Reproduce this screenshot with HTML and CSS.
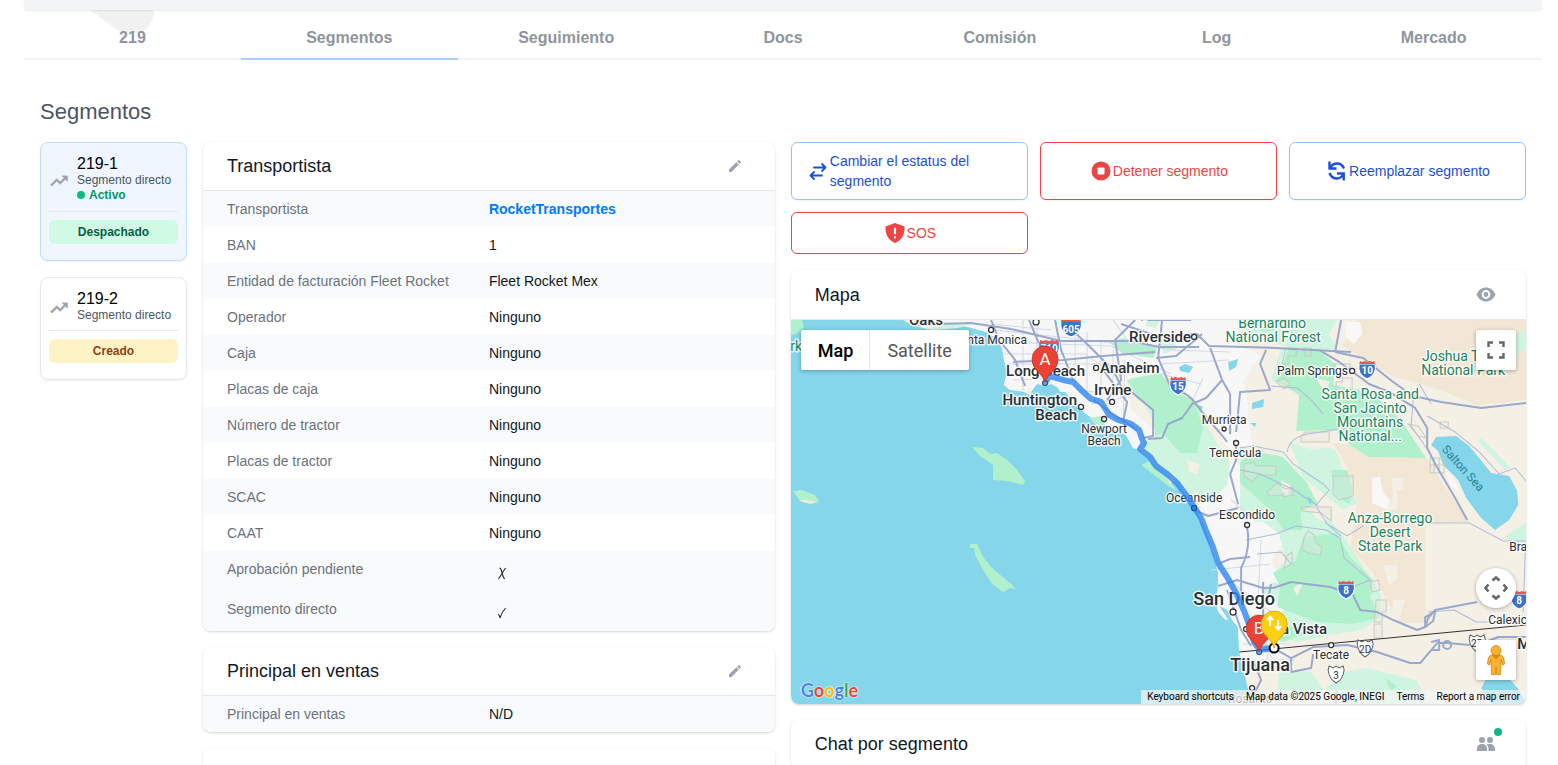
FILE: index.html
```html
<!DOCTYPE html>
<html lang="es">
<head>
    <meta charset="UTF-8">
    <meta name="viewport" content="width=device-width, initial-scale=1.0">
    <title>219 - Segmentos</title>
    <link rel="stylesheet" href="styles.css">
</head>
<body>
    <div class="page">
        <header class="topbar"></header>

        <nav class="tabs">
            <svg class="tabs-leaf" viewBox="0 0 66 24" aria-hidden="true"><path d="M0 0H64C64 12 56 23 44 23C32 23 27 20 22 16Z" fill="#f1f1f1"/></svg>
            <a href="#" class="tab">219</a>
            <a href="#" class="tab active">Segmentos</a>
            <a href="#" class="tab">Seguimiento</a>
            <a href="#" class="tab">Docs</a>
            <a href="#" class="tab">Comisión</a>
            <a href="#" class="tab">Log</a>
            <a href="#" class="tab">Mercado</a>
        </nav>

        <main class="content">
            <h1>Segmentos</h1>

            <div class="columns">
                <!-- Segment list -->
                <aside class="segments">
                    <a href="#" class="segment selected">
                        <span class="segment-info">
                            <svg class="segment-icon" viewBox="0 0 24 24"><path d="M16 6l2.29 2.29-4.88 4.88-4-4L2 16.59 3.41 18l6-6 4 4 6.3-6.29L22 12V6z" fill="#9ca3af" stroke="#9ca3af"/></svg>
                            <span class="segment-text">
                                <span class="segment-name">219-1</span>
                                <span class="segment-type">Segmento directo</span>
                                <span class="segment-active">Activo</span>
                            </span>
                        </span>
                        <span class="badge badge-green">Despachado</span>
                    </a>
                    <a href="#" class="segment">
                        <span class="segment-info">
                            <svg class="segment-icon" viewBox="0 0 24 24"><path d="M16 6l2.29 2.29-4.88 4.88-4-4L2 16.59 3.41 18l6-6 4 4 6.3-6.29L22 12V6z" fill="#9ca3af" stroke="#9ca3af"/></svg>
                            <span class="segment-text">
                                <span class="segment-name">219-2</span>
                                <span class="segment-type">Segmento directo</span>
                            </span>
                        </span>
                        <span class="badge badge-yellow">Creado</span>
                    </a>
                </aside>

                <!-- Details -->
                <div class="stack">
                    <section class="card">
                        <div class="card-header">
                            <h2>Transportista</h2>
                            <button class="icon-btn" aria-label="Editar"><svg width="16" height="16" viewBox="0 0 24 24" fill="#9ca3af"><path d="M3 17.2V21h3.8L17.8 9.9l-3.7-3.7zM20.7 7a1 1 0 0 0 0-1.4l-2.3-2.3a1 1 0 0 0-1.4 0l-1.8 1.8 3.7 3.7z"/></svg></button>
                        </div>
                        <table class="details">
                            <tr class="alt"><th>Transportista</th><td><a href="#">RocketTransportes</a></td></tr>
                            <tr><th>BAN</th><td>1</td></tr>
                            <tr class="alt"><th>Entidad de facturación Fleet Rocket</th><td>Fleet Rocket Mex</td></tr>
                            <tr><th>Operador</th><td>Ninguno</td></tr>
                            <tr class="alt"><th>Caja</th><td>Ninguno</td></tr>
                            <tr><th>Placas de caja</th><td>Ninguno</td></tr>
                            <tr class="alt"><th>Número de tractor</th><td>Ninguno</td></tr>
                            <tr><th>Placas de tractor</th><td>Ninguno</td></tr>
                            <tr class="alt"><th>SCAC</th><td>Ninguno</td></tr>
                            <tr><th>CAAT</th><td>Ninguno</td></tr>
                            <tr class="alt"><th>Aprobación pendiente</th><td><svg class="mark" viewBox="0 0 26 24"><path d="M10.500 9q1.200 0 1.700 2l2.100 7q.4 1.500 1.700 1.500M16.500 9l-7 11" fill="none" stroke="#1f2937" stroke-width="1.100"/></svg></td></tr>
                            <tr class="alt"><th>Segmento directo</th><td><svg class="mark" viewBox="0 0 26 24"><path d="M9 15.500q1.500 0 2 3.500 2-6 5.500-10" fill="none" stroke="#1f2937" stroke-width="1.100"/></svg></td></tr>
                        </table>
                    </section>

                    <section class="card">
                        <div class="card-header">
                            <h2>Principal en ventas</h2>
                            <button class="icon-btn" aria-label="Editar"><svg width="16" height="16" viewBox="0 0 24 24" fill="#9ca3af"><path d="M3 17.2V21h3.8L17.8 9.9l-3.7-3.7zM20.7 7a1 1 0 0 0 0-1.4l-2.3-2.3a1 1 0 0 0-1.4 0l-1.8 1.8 3.7 3.7z"/></svg></button>
                        </div>
                        <table class="details">
                            <tr class="alt"><th>Principal en ventas</th><td>N/D</td></tr>
                        </table>
                    </section>

                    <section class="card">
                        <div class="card-header"></div>
                    </section>
                </div>

                <!-- Actions, map and chat -->
                <div class="stack">
                    <div class="actions">
                        <button class="action blue">
                            <svg viewBox="0 0 20 20" fill="none" stroke="currentColor" stroke-width="1.800" stroke-linecap="round" stroke-linejoin="round"><path d="M6 6.500h11M14 3l3.500 3.500L14 10M14 14.500H3M6 11l-3.500 3.500L6 18"/></svg>
                            <span>Cambiar el estatus del segmento</span>
                        </button>
                        <button class="action red">
                            <svg viewBox="0 0 20 20" fill="currentColor"><circle cx="10" cy="10" r="9.500"/><rect x="6.500" y="6.500" width="7" height="7" rx="1" fill="#fff"/></svg>
                            <span>Detener segmento</span>
                        </button>
                        <button class="action blue">
                            <svg viewBox="0 0 20 20" fill="none" stroke="currentColor" stroke-width="2.400"><path d="M2.500.500v7H9.500M3 7C5 3.500 8 2.500 10 2.500q5 0 7 5M16.700 19.500v-7H10M16.500 13c-2 3.500-4.500 4.500-6.500 4.500q-5.500 0-7.500-5.500"/></svg>
                            <span>Reemplazar segmento</span>
                        </button>
                        <button class="action red">
                            <svg viewBox="0 0 20 20" fill="currentColor"><path d="M10 0L19.500 3.500C20 11 17 17 10 20 3 17 0 11 .5 3.500Z"/><path d="M10 5.500v5M10 14v.5" stroke="#fff" stroke-width="2.200" stroke-linecap="round"/></svg>
                            <span>SOS</span>
                        </button>
                    </div>

                    <section class="card">
                        <div class="card-header tall">
                            <h2>Mapa</h2>
                            <button class="icon-btn wide" aria-label="Ocultar mapa"><svg width="20" height="20" viewBox="0 0 20 20"><path d="M.5 9.500C2.500 5 6 2.500 10 2.500s7.500 2.500 9.500 7c-2 4.500-5.500 7-9.500 7S2.500 14 .5 9.500z" fill="#9ca3af"/><circle cx="10" cy="9.500" r="3.400" fill="#9ca3af" stroke="#fff" stroke-width="2"/></svg></button>
                        </div>
                        <div class="map">
                            <svg class="map-canvas" viewBox="0 0 735 384" preserveAspectRatio="xMidYMid slice">
                                <defs>
                                    <g id="shield">
                                        <path d="M-8-6Q-10 5 0 9Q10 5 8-6Z" fill="#3a73c9" stroke="#fff"/>
                                        <path d="M-7-9l2 1 2-1 3 1 3-1 2 1 2-1 1 3H-8z" fill="#e05a5a"/>
                                    </g>
                                    <g id="shield-wide">
                                        <path d="M-10-6Q-12 6 0 10Q12 6 10-6Z" fill="#3a73c9" stroke="#fff"/>
                                        <path d="M-9-9l3 1 3-1 3 1 3-1 3 1 3-1 1 4H-10z" fill="#e05a5a"/>
                                    </g>
                                    <path id="mx" d="M-7-9l4 2 3-2 3 2 4-2 1 4q-1 9-8 13Q-7 4-8-5z" fill="#fff" stroke="#5f6368"/>
                                    <path id="pin" d="M0 24C-2 14-13 12-13 0a13 13 0 0 1 26 0C13 12 2 14 0 24z"/>
                                </defs>

                                <rect width="735" height="384" fill="#85d6ea"/>
                                <path d="M0 0h11l2 7-8 7-5 1z" fill="#b0f0cc"/>
                                <path d="M181 127l11 1 7 6 7-1 10 7 10 10 8 11-2 4-16-4-14-1v-15l-13-9zM179 224h7l6 13 10 12 17 14 6 6-6-1-7 4-11-8-9-14-8-15-1-7h-4z" fill="#b0f0cc"/>
                                <path d="M2 171l9-1 13 5 4 6-9 2-10-2z" fill="#b0f0cc"/>
                                <path d="M9 181q5-3 10 0l9 1-9 2z" fill="#f3e7d5"/>

                                <!-- Land -->
                                <path d="M112 0L121 5 132 8 142 10 166 8 179 5 195 12 205 18 211 28 213 40 216 52 213 65 219 70 233 72 240 76 246 68 256 70 262 72 270 68 276 74 283 84 298 96 310 99 320 109 335 115 342 128 349 130 359 140 365 147 382 160 395 172 403 188 410 198 415 210 422 233 427 253 427 267 424 280 427 292 434 300 441 299 447 308 448 332 452 347 457 370 458 384H735V0z" fill="#f5f0e5"/>
                                <!-- Urban areas -->
                                <path d="M150 0L195 12 205 18 211 28 213 40 216 52 213 65 219 70 246 68 262 72 276 72 283 84 298 96 320 108 335 115 342 128 350 130 362 125 366 112 340 90 335 60 370 52 400 78 425 110 440 104 458 90 452 60 470 36 445 24 446 0z" fill="#f7f7f7"/>
                                <path d="M398 176L415 210 427 253 426 290 447 306 448 332 455 350 470 345 500 335 490 322 470 310 500 290 520 272 490 262 480 240 498 215 475 205 460 190 452 150 442 140 425 165zM428 90L456 90 462 130 446 136 430 120z" fill="#f7f7f7"/>

                                <!-- Desert -->
                                <path d="M565 0H735V80L685 85 652 71 598 55 551 25zM542 123L579 127 582 137 636 138 649 160 679 202 634 203 634 303 607 303 582 253 559 227 566 183 556 147z" fill="#f2e6d5"/>
                                <path d="M581 158L589 157 592 173 599 180 596 190 581 183zM655 152L664 160 668 172 660 166zM555 2l14 0 2 12-8 10-8-6z" fill="#f9f8f7"/>
                                <path d="M600 158h12v12h-6v20h-10l6-14zM592 245h14v14l-8 6zM602 280h12l-6 20h-8z" fill="#f5f0e5"/>

                                <!-- Parks and forests -->
                                <g fill="#cff5e0">
                                    <path d="M445 0H545L538 14 545 28 528 32 498 28 478 20 455 14zM355 0h14l-4 8-10-2zM369 24l12-4 6 8-14 6zM142 2h20l18 2-18 4-20 2z"/>
                                    <path d="M339 58L369 53 386 73 405 82 414 103 426 123 439 143 436 165 425 176 403 187 382 158 365 146 352 126 368 112z"/>
                                    <path d="M498 122L520 118 545 131 555 158 566 183 552 190 530 172 512 158zM490 28L480 60 505 72 525 80 510 30z"/>
                                    <path d="M449 126L465 130 500 200 465 202 449 190zM465 196L530 190 552 215 590 275 588 298 570 310 505 322 480 312 478 300 500 285 482 253 495 240 488 214z"/>
                                    <path d="M575 348L625 360 640 384H560L535 368 552 352zM488 350l32 2 12 18-47 14zM705 24l30-14v20l-20 8zM715 216l20-14v30l-14-4z"/>
                                    <path d="M470 268l14-6 10 6-8 14-14-4zM690 118l30 30-6 2-28-30z"/>
                                </g>
                                <g fill="#b0f0cc">
                                    <path d="M336 60L369 53 386 73 402 80 412 107 406 133 389 133 372 113 364 116 362 90 345 78zM350 145l8-4 16 14 12 16-10-6z"/>
                                    <path d="M318 22l14-4 14 6 8 6-2 6-20-2zM340 28l12-8 14 10-4 8-14-2zM298 98l14-2 4 6-10 4zM470 0h20l-6 10-14 2z"/>
                                    <path d="M498 28L528 30 545 45 542 65 578 71 598 88 613 105 635 138 578 137 560 126 545 112 552 110 505 111 508 75 485 61z"/>
                                    <path d="M459 130L492 137 516 163 526 183 509 193 512 210 492 210 479 190 449 163V143zM540 150l16 0 6 20-4 14-14-8z"/>
                                    <path d="M512 217L545 213 559 237 582 260 579 277 588 298 562 304 526 302 486 287 489 267 482 253 505 240zM479 318l20-12 14 8-20 8zM594 358l12 8-6 6z"/>
                                </g>
                                <g fill="#f5f0e5">
                                    <path d="M500 112l30 2 12 12-18 4-22-6zM460 44l18 4 6 30-14 24-8-20zM396 140l12 4-2 10-8-2zM520 186l16 4-2 12-10-4zM375 156l8 4-4 4zM525 58l14 4-6 10z"/>
                                    <path d="M490 160l10 6-4 10-6-6zM512 262l-10 6 4 8zM535 316l20-4-4 8-14 2z"/>
                                </g>

                                <!-- Lakes -->
                                <path d="M645 117L665 116 678 126 688 138 700 153 718 156 726 171 727 185 718 200 704 210 690 198 675 178 667 160 652 145 647 131 640 125zM690 368L700 350 712 352 728 370 735 384H700zM388 47l6-3 8 3-4 6-9-2zM437 42l10-3-2 8-7 4zM461 83l12-4-1 8-11 2zM404 83l8 4-3 5zM516 177l5 2-2 6zM459 103h6l-1 4z" fill="#85d6ea"/>
                                <path d="M240 72l6-8 8 2 6-2 6 3 4 6-4 4-12-3-4 6-10 2zM428 286l8 4 8 16-8-8z" fill="#85d6ea"/>

                                <!-- Reservations -->
                                <g fill="#e6e6e0" fill-opacity=".4" stroke="#c8cbc6">
                                    <path d="M510 116l4-4h24v10h-28zM542 156h20v20l-14 4-6-6zM453 144l10-2 2 4h20v9h-18l-6 7-8-6zM476 172l10-9 8 6 8-2v8l-10 2v-2l-14 1zM485 62l8-4 6 6-6 5z"/>
                                    <path d="M513 217l4-6 6 4 2 8 6 4-2 8-12-2-6-4zM495 236l6-4v12l-8 4zM579 262l8-2 2 10-8 2zM585 280h10v12h-4v10h-8zM583 304h8v14h-8zM510 187h30v14l-10-8-18-2z"/>
                                    <path d="M495 28h10v8h-8v8h-6zM512 28h8v8h-6zM543 44h16v6h-10v8h12v12h-16v-8h6v-6h-8zM639 138h14v7h-14zM639 145h14v8h-14zM643 138v15M648 138v15M617 104l10 2 8 12-8-2zM649 102h8v6h-8z" fill="none"/>
                                </g>

                                <!-- Minor roads -->
                                <g fill="none" stroke="#d3d9e8">
                                    <path d="M205 10l180 20M210 22l110 4 60 28M216 44h90M222 60l50-2M214 34h80l20 14M232 0v70M246 0v60M284 6v60M296 12v66M310 20v54M322 30v50M334 40l-2 60M200 4l60 6M290 70l40 6M300 84l40-8M322 0l20 28"/>
                                    <path d="M368 44l70-4M380 30l60 2M370 54l40 10M398 88l14-30M440 180l24 20M420 250l60-6M440 262l40 30M470 220l-4 70M462 300l20 40M452 324h46M454 340h50M476 324v24"/>
                                </g>
                                <g fill="none" stroke="#b0bbd8">
                                    <path d="M448 128l14-2 30 6 10 12 30 20 6 6-14 16M496 132q2-14 20-18l40-6M480 66l26 2 14 12 12 14M526 188l10 16 20 12 16-10M449 150l20 4 34 16 24 16M455 220l30-6 20-8 30 4 14 8 4 20 26 22-20 8M534 202l16 14M500 244l-10-12-24 2"/>
                                    <path d="M622 80l-2 26 18 26M636 96l28 16 24 20 20 22 16-6 20 24M640 203h38l34 18 23 0M734 232l-2 60M637 292l26-2 22 12 14 0M628 64l12 20"/>
                                </g>

                                <!-- Highways -->
                                <g fill="none" stroke="#9aa8cb" stroke-width="2" stroke-linejoin="round">
                                    <path d="M120 5l60-2 40 6 50 12 70 0 28 6h40M200 0l8 20 16 20 10 26M238 0l10 24 6 34M222 42l50-2 40-4 52-4M264 0l6 30 12 30M270 0l26 24 26 26 10 20M330 4l36 12 40-2M344 0l-20 20 6 40-14 20M365 38l20-2 26-22M371 0l-4 38 12 28"/>
                                    <path d="M382 70q16 2 24 16l22 26 8 10M406 14l12 12 66 2 76 4M419 28l12 32-16 18-14 6-10 14-14 6-6 14-14 1M431 60l8 14 0 40M475 30l-6 14 10 26-30 2-4 40M350 0h50M550 0l-6 32"/>
                                    <path d="M528 30l20 12 30 22 20 8M544 32l28 6 30 24 20 14 28 6 40 6 45-5M598 72l26 16 12 20v20l8 16 20 34 12 22"/>
                                    <path d="M302 80l20 14 24 16M338 70l24 20v26l-10 2M312 50l24 32-4 20M445 124v16l-6 14 8 30M403 190l14 6 30-8"/>
                                    <path d="M456 208q4 20-6 40l0 34M429 243l10-4 20-2M427 266L446 260 472 268 482 268 500 262 539 267 562 275 569 290 586 292 602 300 626 310 634 307 637 298 644 290 686 282"/>
                                    <path d="M472 262v50M480 264l-4 20M436 270l14 40 10 16M468 332L486 330 500 338 522 327 556 325 586 332 619 343 629 343 646 323 656 323 679 325M500 338v14l20-4 2-14M462 340l8 20-12 24M545 370v14M687 325l20-8h28"/>
                                    <path d="M634 307l0-10 10-6-2 10zM640 322l8-2 0 10-8 0"/>
                                </g>
                                <circle cx="656" cy="325" r="4" fill="none" stroke="#9aa8cb" stroke-width="2"/>

                                <!-- Border -->
                                <path d="M448 332L735 305" stroke="#333" fill="none"/>

                                <!-- Place labels -->
                                <g class="place small">
                                    <text x="236" y="24" text-anchor="end">Santa Monica</text>
                                    <text x="313" y="113" text-anchor="middle">Newport</text>
                                    <text x="313" y="125" text-anchor="middle">Beach</text>
                                    <text x="433" y="104" text-anchor="middle">Murrieta</text>
                                    <text x="444" y="137" text-anchor="middle">Temecula</text>
                                    <text x="486" y="55">Palm Springs</text>
                                    <text x="403" y="182" text-anchor="middle">Oceanside</text>
                                    <text x="456" y="199" text-anchor="middle">Escondido</text>
                                    <text x="540" y="339" text-anchor="middle">Tecate</text>
                                    <text x="697" y="304">Calexico</text>
                                    <text x="718" y="231">Brawley</text>
                                    <text x="437" y="383">Rosarito</text>
                                </g>
                                <g class="place medium">
                                    <text x="118" y="5">Oaks</text>
                                    <text x="338" y="22">Riverside</text>
                                    <text x="215" y="56">Long Beach</text>
                                    <text x="309" y="53">Anaheim</text>
                                    <text x="286" y="85" text-anchor="end">Huntington</text>
                                    <text x="286" y="100" text-anchor="end">Beach</text>
                                    <text x="303" y="75">Irvine</text>
                                    <text x="536" y="314" text-anchor="end">Chula Vista</text>
                                    <text x="726" y="329">Mexicali</text>
                                </g>
                                <g class="place large">
                                    <text x="443" y="285" text-anchor="middle">San Diego</text>
                                    <text x="469" y="351" text-anchor="middle">Tijuana</text>
                                </g>
                                <g class="place park" text-anchor="middle">
                                    <text x="481" y="8">Bernardino</text>
                                    <text x="482" y="22">National Forest</text>
                                    <text x="579" y="79">Santa Rosa and</text>
                                    <text x="579" y="93">San Jacinto</text>
                                    <text x="579" y="107">Mountains</text>
                                    <text x="579" y="121">National...</text>
                                    <text x="669" y="41">Joshua Tree</text>
                                    <text x="672" y="55">National Park</text>
                                    <text x="599" y="203">Anza-Borrego</text>
                                    <text x="599" y="217">Desert</text>
                                    <text x="599" y="231">State Park</text>
                                    <text x="-3" y="31">Park</text>
                                </g>
                                <text class="water" transform="translate(669 151) rotate(48)" text-anchor="middle">Salton Sea</text>

                                <g fill="#fff" stroke="#333" stroke-width="1.300">
                                    <circle cx="200" cy="10" r="2.500"/><circle cx="245" cy="2" r="3"/><circle cx="305" cy="48" r="2.500"/><circle cx="403" cy="17" r="2.500"/>
                                    <circle cx="321" cy="82" r="2.500"/><circle cx="290" cy="87" r="2.500"/><circle cx="313" cy="99" r="2.500"/><circle cx="433" cy="109" r="2"/>
                                    <circle cx="445" cy="123" r="2.500"/><circle cx="561" cy="51" r="2.500"/><circle cx="403" cy="188" r="2.500"/><circle cx="456" cy="205" r="2.500"/>
                                    <circle cx="442" cy="292" r="3"/><circle cx="540" cy="325" r="2.500"/><circle cx="461" cy="368" r="2.500"/><circle cx="455" cy="309" r="2.500"/>
                                </g>

                                <!-- Highway shields -->
                                <use href="#shield-wide" x="280" y="7"/><use href="#shield-wide" x="258" y="29"/><use href="#shield" x="354" y="-8"/>
                                <use href="#shield" x="387" y="66"/><use href="#shield" x="576" y="50"/><use href="#shield" x="555" y="270"/><use href="#shield" x="728" y="280"/>
                                <g class="shield-text" text-anchor="middle">
                                    <text x="280" y="13">605</text><text x="258" y="32">710</text><text x="387" y="70">15</text><text x="576" y="54">10</text>
                                    <text x="555" y="274">8</text><text x="728" y="284">8</text>
                                </g>
                                <use href="#mx" x="574" y="329"/><use href="#mx" x="545" y="355"/><use href="#mx" x="686" y="324"/>
                                <g class="mx-text" text-anchor="middle"><text x="574" y="333">2D</text><text x="545" y="359">3</text><text x="686" y="327">2D</text></g>

                                <!-- Route -->
                                <path d="M254 63L258 56 272 60 282 62 290 70 300 79 310 82 315 90 318 95 327 100 340 104 348 110 351 119 353 123 349 129 359 137 365 146 376 154 386 163 395 175 403 187 410 198 415 211 421 225 427 243 436 257 445 273 453 291 459 307 463 322 468 329 483 328" fill="none" stroke="#2f86f2" stroke-opacity=".8" stroke-width="6" stroke-linejoin="round" stroke-linecap="round"/>
                                <circle cx="254" cy="63" r="2.500" fill="#6aa9f5" stroke="#1f4e96"/>
                                <circle cx="403" cy="188" r="2.500" fill="#2f86f2" stroke="#1f4e96"/>
                                <circle cx="468" cy="332" r="2.500" fill="#6aa9f5" stroke="#1f4e96"/>
                                <circle cx="483" cy="328" r="4.500" fill="#fff" stroke="#000" stroke-width="2"/>
                                <use href="#pin" x="254" y="39" fill="#ea4335" stroke="#b3261e" stroke-width=".6"/>
                                <use href="#pin" x="468" y="308" fill="#ea4335" stroke="#b3261e" stroke-width=".6"/>
                                <g class="pin-text" text-anchor="middle"><text x="254" y="45">A</text><text x="468" y="314">B</text></g>
                                <use href="#pin" x="483" y="304" fill="#fccf12" stroke="#dc9a00" stroke-width=".8"/>
                                <path d="M479 306v-9M476 300l3-3.500 3 3.500M487 300v9M484 306l3 3.500 3-3.500" fill="none" stroke="#fff" stroke-width="2"/>
                            </svg>

                            <div class="map-type">
                                <button class="chosen">Map</button>
                                <button>Satellite</button>
                            </div>
                            <button class="map-btn fullscreen" aria-label="Fullscreen"><svg width="18" height="18" viewBox="0 0 18 18"><path d="M1.500 6V1.500H6M12 1.500h4.500V6M16.500 12v4.500H12M6 16.500H1.500V12" fill="none" stroke="#666" stroke-width="2.400"/></svg></button>
                            <button class="map-btn camera" aria-label="Camera controls"><svg width="24" height="24" viewBox="0 0 24 24"><path d="M8.500 4.500L12 1.500l3.500 3M8.500 19.500l3.500 3 3.500-3M4.500 8.500L1.500 12l3 3.500M19.500 8.500l3 3.500-3 3.500" fill="none" stroke="#666" stroke-width="2.600"/></svg></button>
                            <button class="map-btn pegman" aria-label="Street View"><svg width="18" height="30" viewBox="0 0 18 30" fill="#fbb12d" stroke="#c9861b" stroke-width=".8"><path d="M4 10h10q3 1 3.500 9l-2 1-1.500-5-.5 14.500h-4L9 22l-.5 7.500h-4L4 15l-1.500 5-2-1Q1 11 4 10z"/><path d="M5 10h8l-4 4z" fill="#e28b1d"/><circle cx="9" cy="5.500" r="5"/></svg></button>

                            <a href="#" class="google-logo"><span class="g-blue">G</span><span class="g-red">o</span><span class="g-yellow">o</span><span class="g-blue">g</span><span class="g-green">l</span><span class="g-red">e</span></a>
                            <div class="map-credits">
                                <button>Keyboard shortcuts</button>
                                <span>Map data ©2025 Google, INEGI</span>
                                <a href="#">Terms</a>
                                <a href="#">Report a map error</a>
                            </div>
                        </div>
                    </section>

                    <section class="card">
                        <div class="card-header">
                            <h2>Chat por segmento</h2>
                            <button class="icon-btn wide people" aria-label="Participantes">
                                <svg width="20" height="20" viewBox="0 0 20 20" fill="#9ca3af"><circle cx="6" cy="6" r="3"/><circle cx="14" cy="6" r="3"/><path d="M1 17v-2c0-3 2-5 5-5s5 2 5 5v2zM12.500 17v-2q0-3-2-4.500Q12 10 14 10c3 0 5 2 5 5v2z"/></svg>
                                <span class="online"></span>
                            </button>
                        </div>
                    </section>
                </div>
            </div>
        </main>
    </div>
</body>
</html>
```
FILE: styles.css
```css
* {
    box-sizing: border-box;
}

body {
    margin: 0;
    font-family: "Liberation Sans", Arial, sans-serif;
    font-size: 14px;
    line-height: 20px;
    background-color: #fff;
    color: #111827;
    overflow-x: hidden;
}

a {
    text-decoration: none;
}

button {
    font-family: inherit;
    margin: 0;
    padding: 0;
    border: none;
    background: none;
    cursor: pointer;
}

.page {
    margin: 0 16px 0 24px;
}

.topbar {
    position: relative;
    z-index: 1;
    height: 10px;
    background: #f3f4f6;
    border-radius: 0 0 4px 4px;
    box-shadow: 0 1px 2px rgba(0, 0, 0, 0.08);
}

/* Tabs */
.tabs {
    position: relative;
    display: flex;
}

.tabs-leaf {
    position: absolute;
    top: 0;
    left: 66px;
    width: 66px;
    height: 24px;
}

.tab {
    position: relative;
    flex: 1;
    padding: 18px 0 10px;
    text-align: center;
    font-size: 16px;
    font-weight: bold;
    color: #8f959c;
    border-bottom: 2px solid #f1f2f4;
}

.tab.active {
    border-bottom-color: #a9cffc;
}

.content {
    padding: 37px 16px 0;
}

h1 {
    margin: 0 0 15px;
    font-size: 22px;
    font-weight: normal;
    line-height: 30px;
    color: #4b5563;
}

.columns {
    display: grid;
    grid-template-columns: 147px 7fr 9fr;
    align-items: start;
    gap: 16px;
}

.stack {
    display: flex;
    flex-direction: column;
    gap: 16px;
    min-width: 0;
}

/* Segment list */
.segments {
    display: flex;
    flex-direction: column;
    gap: 16px;
}

.segment {
    display: block;
    padding: 12px 8px 16px;
    border: 1px solid #e5e7eb;
    border-radius: 8px;
    box-shadow: 0 1px 2px rgba(0, 0, 0, 0.06);
}

.segment.selected {
    background: #eff6ff;
    border-color: #bfdbfe;
}

.segment-info {
    display: flex;
    align-items: center;
    gap: 8px;
    padding-bottom: 8px;
    border-bottom: 1px solid #e5e7eb;
}

.segment-icon {
    width: 20px;
    height: 20px;
    margin-top: 4px;
}

.segment-text span {
    display: block;
    font-size: 12px;
    line-height: 16px;
}

.segment-text .segment-name {
    font-size: 16px;
    line-height: 18px;
    color: #000;
}

.segment-text .segment-type {
    line-height: 14px;
    color: #4b5563;
    white-space: nowrap;
}

.segment-active {
    font-weight: bold;
    color: #059669;
}

.segment-active::before {
    content: "";
    display: inline-block;
    width: 8px;
    height: 8px;
    margin-right: 4px;
    border-radius: 50%;
    background: #10b981;
}

.badge {
    display: block;
    margin-top: 8px;
    border-radius: 6px;
    text-align: center;
    font-size: 12px;
    font-weight: bold;
    line-height: 24px;
}

.badge-green {
    background: #d1fae5;
    color: #065f46;
}

.badge-yellow {
    background: #fef3c7;
    color: #92400e;
}

/* Cards */
.card {
    background: #fff;
    border-radius: 8px;
    overflow: hidden;
    box-shadow: 0 1px 3px rgba(0, 0, 0, 0.12), 0 1px 2px rgba(0, 0, 0, 0.06);
}

.card-header {
    display: flex;
    justify-content: space-between;
    align-items: center;
    height: 49px;
    padding: 0 32px 0 24px;
    border-bottom: 1px solid #e5e7eb;
}

.card-header.tall {
    height: 50px;
}

h2 {
    margin: 0;
    font-size: 18px;
    font-weight: normal;
    line-height: 28px;
}

.icon-btn svg {
    display: block;
}

.icon-btn.wide {
    margin-right: -2px;
}

.people {
    position: relative;
}

.online {
    position: absolute;
    top: -6px;
    right: -6px;
    width: 8px;
    height: 8px;
    border-radius: 50%;
    background: #10b981;
}

.details {
    width: 100%;
    border-collapse: collapse;
    table-layout: fixed;
}

.details .alt {
    background: #f9fafb;
}

.details th,
.details td {
    width: 50%;
    padding: 8px 0;
    text-align: left;
    vertical-align: top;
}

.details th {
    padding-left: 24px;
    font-weight: normal;
    color: #6b7280;
}

.details a {
    font-weight: bold;
    color: #007bff;
}

.mark {
    display: block;
    width: 26px;
    height: 24px;
}

/* Actions */
.actions {
    display: grid;
    grid-template-columns: repeat(3, 1fr);
    gap: 12px;
}

.action {
    display: flex;
    justify-content: center;
    align-items: center;
    gap: 2px;
    min-height: 42px;
    padding: 8px 14px 8px 16px;
    border: 1px solid;
    border-radius: 6px;
    background: #fff;
    font-size: 14px;
    line-height: 20px;
    text-align: left;
    box-shadow: 0 1px 2px rgba(0, 0, 0, 0.05);
}

.action svg {
    flex: none;
    width: 20px;
    height: 20px;
}

.action.blue {
    border-color: #93c5fd;
    color: #1d4ed8;
}

.action.red {
    border-color: #ef4444;
    color: #ef4444;
}

/* Map */
.map {
    position: relative;
    height: 384px;
    font-family: Roboto, Arial, sans-serif;
}

.map-canvas {
    display: block;
    width: 100%;
    height: 100%;
}

.place {
    fill: #2b2f33;
    stroke: #fff;
    stroke-width: 3px;
    stroke-opacity: 0.8;
    stroke-linejoin: round;
    paint-order: stroke;
}

.small {
    font-size: 12px;
}

.medium {
    font-size: 15px;
    font-weight: 500;
}

.large {
    font-size: 18px;
    font-weight: 500;
}

.park {
    font-size: 14px;
    fill: #1d8560;
}

.water {
    font-size: 12px;
    fill: #27819b;
}

.shield-text {
    font-size: 10px;
    font-weight: bold;
    fill: #fff;
}

.mx-text {
    font-size: 10px;
    fill: #333;
}

.pin-text {
    font-size: 17px;
    fill: #fff;
}

.map-type {
    position: absolute;
    top: 10px;
    left: 10px;
    display: flex;
    height: 40px;
    background: #fff;
    border-radius: 2px;
    box-shadow: 0 1px 4px rgba(0, 0, 0, 0.3);
}

.map-type button {
    padding: 0 17px;
    font-size: 18px;
    color: #565656;
}

.map-type .chosen {
    padding-right: 16px;
    font-weight: 500;
    color: #000;
    border-right: 1px solid #e6e6e6;
}

.map-btn {
    position: absolute;
    right: 10px;
    display: flex;
    justify-content: center;
    align-items: center;
    width: 40px;
    height: 40px;
    background: #fff;
    border-radius: 2px;
    box-shadow: 0 1px 4px rgba(0, 0, 0, 0.3);
}

.fullscreen {
    top: 10px;
}

.camera {
    bottom: 96px;
    border-radius: 50%;
}

.pegman {
    bottom: 24px;
}

.google-logo {
    position: absolute;
    left: 10px;
    bottom: 2px;
    font-family: Lato, sans-serif;
    font-size: 18px;
    font-weight: bold;
    line-height: 24px;
    text-shadow: 0 0 1px #fff, 0 0 1px #fff, 0 0 2px #fff;
}

.g-blue {
    color: #4285f4;
}

.g-red {
    color: #ea4335;
}

.g-yellow {
    color: #fbbc04;
}

.g-green {
    color: #34a853;
}

.map-credits {
    position: absolute;
    right: 0;
    bottom: 0;
    display: flex;
    height: 14px;
    background: rgba(245, 245, 245, 0.7);
    font-size: 10px;
    line-height: 14px;
    white-space: nowrap;
}

.map-credits > * {
    padding: 0 6px;
    font-size: 10px;
    line-height: 14px;
    color: #000;
}
```
